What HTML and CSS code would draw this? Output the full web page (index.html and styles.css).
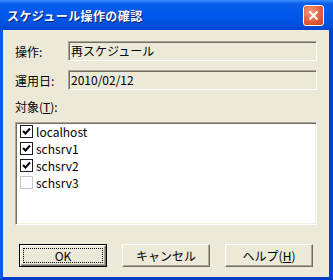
FILE: index.html
```html
<!DOCTYPE html>
<html lang="ja">
  <head>
    <meta charset="UTF-8" />
    <title>スケジュール操作の確認</title>
    <link rel="stylesheet" href="styles.css">
  </head>
  <body>
    <div class="window">
      <div class="titlebar">
        <span class="title">スケジュール操作の確認</span>
        <button class="btn-close" type="button">
          <svg width="11" height="11" viewBox="0 0 11 11">
            <path d="M1.5 1.5 L9.5 9.5 M9.5 1.5 L1.5 9.5" stroke="#fff" stroke-width="2" />
          </svg>
        </button>
      </div>

      <div class="content">
        <div class="form">
          <label>操作:</label>
          <div class="field">再スケジュール</div>
          <label>運用日:</label>
          <div class="field">2010/02/12</div>
        </div>

        <p class="list-label">対象(<u>T</u>):</p>
        <ul class="list">
          <li><span class="chk on"></span>localhost</li>
          <li><span class="chk on"></span>schsrv1</li>
          <li><span class="chk on"></span>schsrv2</li>
          <li><span class="chk off"></span>schsrv3</li>
        </ul>

        <div class="buttons">
          <button class="btn default" type="button"><span class="focus">OK</span></button>
          <button class="btn" type="button">キャンセル</button>
          <button class="btn" type="button">ヘルプ(<u>H</u>)</button>
        </div>
      </div>
    </div>
  </body>
</html>
```

FILE: styles.css
```css
html,
body {
  margin: 0;
  padding: 0;
}

body {
  font-family: "Noto Sans CJK JP", sans-serif;
  font-size: 12px;
  color: #000;
}

ul,
li,
p {
  list-style: none;
  margin: 0;
  padding: 0;
}

.window {
  width: 333px;
  height: 280px;
  box-sizing: border-box;
  display: flex;
  flex-direction: column;
  border-left: 3px solid #0a5ae8;
  border-right: 4px solid #0040cf;
  border-bottom: 3px solid #003bc8;
  background: #ece9d8;
}

/* タイトルバー */
.titlebar {
  height: 30px;
  flex: none;
  margin: 0 -4px 0 -3px;
  padding: 0 9px 0 7px;
  display: flex;
  align-items: center;
  justify-content: space-between;
  background: linear-gradient(#3d8ffb 0%, #0a5fea 12%, #0058ee 45%, #0054e3 70%, #0046d3 100%);
}

.title {
  color: #fff;
  font-weight: bold;
  font-size: 12px;
  letter-spacing: 0.4px;
  text-shadow: 1px 1px #0a1f70;
}

.btn-close {
  width: 21px;
  height: 21px;
  padding: 0;
  border: 1px solid #fff;
  border-radius: 3px;
  background: radial-gradient(circle at 35% 30%, #f29a7c, #e1603b 55%, #c4401f);
  display: flex;
  align-items: center;
  justify-content: center;
}

.content {
  flex: 1;
  padding: 11px 12px 10px 12px;
  display: flex;
  flex-direction: column;
}

/* 入力欄 */
.form {
  display: grid;
  grid-template-columns: 53px 1fr;
  row-gap: 9px;
  align-items: center;
}

.field {
  height: 20px;
  box-sizing: border-box;
  padding-left: 2px;
  line-height: 18px;
  border: 1px solid;
  border-color: #aca899 #fff #fff #aca899;
  box-shadow: inset 1px 1px 0 #716f64;
}

.list-label {
  margin-top: 10px;
  line-height: 14px;
}

/* 対象リスト */
.list {
  margin-top: 8px;
  height: 103px;
  box-sizing: border-box;
  padding: 0 0 0 4px;
  background: #fff;
  border: 1px solid;
  border-color: #aca899 #fff #fff #aca899;
  box-shadow: inset 1px 1px 0 #716f64, inset -1px -1px 0 #f1efe2;
}

.list li {
  height: 17px;
  display: flex;
  align-items: center;
  gap: 3px;
}

.chk {
  width: 13px;
  height: 13px;
  box-sizing: border-box;
  border: 1px solid #1c1c1c;
  background: #fff;
  flex: none;
}

.chk.on {
  background: #fff url("data:image/svg+xml;utf8,<svg xmlns='http://www.w3.org/2000/svg' width='11' height='11'><path d='M2 5 L4.5 7.5 L9 2.5' fill='none' stroke='black' stroke-width='2'/></svg>") no-repeat center;
}

.chk.off {
  border-color: #c8c8c8;
}

/* ボタン */
.buttons {
  margin-top: 19px;
  display: flex;
  justify-content: center;
  gap: 15px;
}

.btn {
  width: 88px;
  height: 23px;
  padding: 0;
  font-family: inherit;
  font-size: 12px;
  color: #000;
  background: #ece9d8;
  border: 1px solid;
  border-color: #fff #716f64 #716f64 #fff;
  box-shadow: inset -1px -1px 0 #aca899;
}

.btn.default {
  border: 1px solid #000;
  box-shadow: inset 1px 1px 0 #fff, inset -1px -1px 0 #716f64, inset -2px -2px 0 #aca899;
  padding: 3px;
}

.focus {
  display: block;
  height: 100%;
  box-sizing: border-box;
  border: 1px dotted #000;
  line-height: 13px;
}
```
